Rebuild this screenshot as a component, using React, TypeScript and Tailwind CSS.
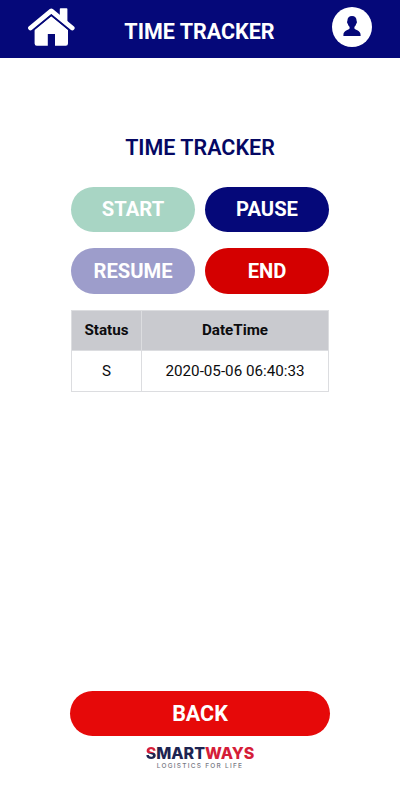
import React from 'react';

function HomeIcon() {
  return (
    <svg width="48" height="40" viewBox="0 0 48 40" fill="#fff" aria-label="Home">
      <path d="M33.6 1.2h6a.8.8 0 0 1 .8.8v14L32.8 9V2a.8.8 0 0 1 .8-.8z" />
      <path d="M3.5 21 24.3 3.9 45.2 21" fill="none" stroke="#fff" strokeWidth="4.8" strokeLinecap="round" strokeLinejoin="round" />
      <path d="M24.3 9.2 41 22.8V36.5a2.2 2.2 0 0 1-2.2 2.2H28V27h-7.2V38.7H9.8a2.2 2.2 0 0 1-2.2-2.2V22.8z" />
      <path d="M6 23.4 24.3 8.2 42.7 23.4" fill="none" stroke="#050879" strokeWidth="1.3" />
    </svg>
  );
}

function UserIcon() {
  return (
    <svg width="40" height="40" viewBox="0 0 40 40" aria-label="Profile">
      <circle cx="20" cy="20" r="20" fill="#fff" />
      <path
        fill="#050879"
        d="M20 9c-2.9 0-4.6 1.9-4.6 4.8 0 .5-.5.8-.3 1.7.2.9.6 1 .8 1.6.3 1.3 1 2.2 1.7 2.8v1.6c-.8 1.5-6.2 1.7-6.2 6.4v1.1h17.2v-1.1c0-4.7-5.4-4.9-6.2-6.4v-1.6c.7-.6 1.4-1.5 1.7-2.8.2-.6.6-.7.8-1.6.2-.9-.3-1.2-.3-1.7 0-2.9-1.7-4.8-4.6-4.8z"
      />
    </svg>
  );
}

function Pill({ label, className }: { label: string; className: string }) {
  return (
    <button className={`flex items-center justify-center rounded-full font-bold text-white ${className}`}>
      {label}
    </button>
  );
}

export default function App() {
  return (
    <div className="flex h-[800px] w-[400px] flex-col bg-white font-[Roboto,sans-serif]">
      <header className="flex h-[58px] shrink-0 items-start justify-between bg-[#050879] pr-7 pl-[27px]">
        <div className="w-12 pt-[7px]"><HomeIcon /></div>
        <h1 className="pt-[17px] text-[21.5px] leading-[30px] font-bold whitespace-nowrap text-white">TIME TRACKER</h1>
        <div className="flex w-12 justify-end pt-[7px]"><UserIcon /></div>
      </header>

      <main className="flex flex-1 flex-col pt-[75px]">
        <h2 className="text-center text-[21.5px] leading-[30px] font-semibold text-[#050863]">TIME TRACKER</h2>
        <div className="mt-6 ml-[71px] grid grid-cols-[124px_124px] gap-x-2.5 gap-y-4">
          <Pill label="START" className="h-[45px] bg-[#a8d5c4] pb-px text-[20.2px]" />
          <Pill label="PAUSE" className="h-[45px] bg-[#050879] pb-px text-[20.2px]" />
          <Pill label="RESUME" className="h-[46px] bg-[#9d9dcb] text-[20.2px]" />
          <Pill label="END" className="h-[46px] bg-[#d40000] text-[20.2px]" />
        </div>

        <table className="mt-4 ml-[71px] w-[258px] table-fixed border-collapse text-center text-[15.2px] leading-5 text-[#0c0c0e]">
          <thead>
            <tr className="h-10 bg-[#c9cacf]">
              <th className="w-[70px] border border-[#dcdde0] p-0 pb-0.5 font-bold">Status</th>
              <th className="border border-[#dcdde0] p-0 pb-0.5 font-bold">DateTime</th>
            </tr>
          </thead>
          <tbody>
            <tr className="h-[41px]">
              <td className="border border-[#dcdde0] p-0">S</td>
              <td className="border border-[#dcdde0] p-0">2020-05-06 06:40:33</td>
            </tr>
          </tbody>
        </table>
      </main>

      <footer className="flex h-[109px] shrink-0 flex-col items-center">
        <Pill label="BACK" className="h-[45px] w-[260px] bg-[#e60909] pt-0.5 text-[21.5px]" />
        <div className="mt-[9px] text-center font-[Inter,sans-serif] whitespace-nowrap">
          <div className="text-[16px] leading-[16px] font-extrabold text-[#1d2451]">
            <span className="bg-linear-to-b from-[#d51d38] from-50% to-[#1d2451] to-50% bg-clip-text text-transparent">S</span>MART<span className="text-[#d51d38]">WAYS</span>
          </div>
          <div className="mt-0.5 text-[6.5px] leading-[7px] font-medium tracking-[1.25px] text-[#777984]">LOGISTICS FOR LIFE</div>
        </div>
      </footer>
    </div>
  );
}
